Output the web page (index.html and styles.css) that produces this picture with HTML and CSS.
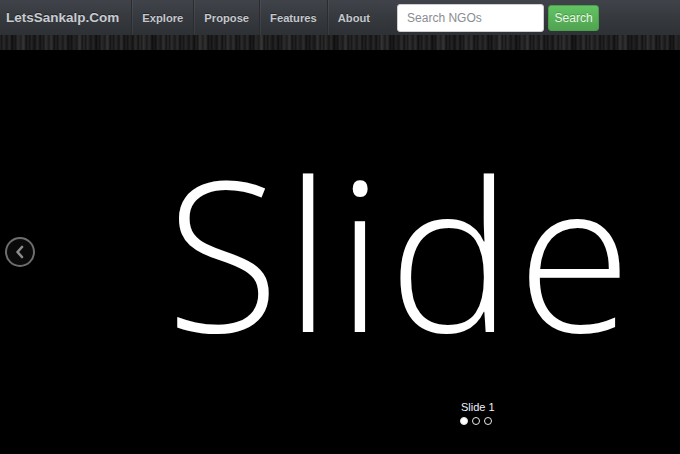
FILE: index.html
```html
<!DOCTYPE html>
<html>
<head>
<meta charset="utf-8">
<link rel="stylesheet" href="styles.css">
</head>
<body>
<header class="navbar">
  <a class="brand" href="#">LetsSankalp.Com</a>
  <ul class="nav">
    <li><a href="#">Explore</a></li>
    <li><a href="#">Propose</a></li>
    <li><a href="#">Features</a></li>
    <li><a href="#">About</a></li>
  </ul>
  <form class="search">
    <input class="search-input" type="text" placeholder="Search NGOs">
    <button class="search-btn" type="button">Search</button>
  </form>
</header>
<div class="wood"></div>
<section class="carousel">
  <div class="slide-text">Slide</div>
  <a class="arrow-left" href="#"><svg width="12" height="14" viewBox="0 0 12 14"><path d="M8 2 L3.5 7 L8 12" fill="none" stroke="#8c8c8c" stroke-width="2.6" stroke-linecap="round" stroke-linejoin="round"/></svg></a>
  <div class="caption">
    <div class="caption-label">Slide <span class="num">1</span></div>
    <div class="dots"><span class="dot on"></span><span class="dot"></span><span class="dot"></span></div>
  </div>
</section>
</body>
</html>
```
FILE: styles.css
```css
html, body {
  margin: 0;
  padding: 0;
  background: #000;
  height: 100%;
  overflow: hidden;
}
body {
  font-family: "Liberation Sans", Arial, sans-serif;
}
.navbar {
  height: 35px;
  display: flex;
  align-items: center;
  background: linear-gradient(to bottom, #40444a 0%, #35383d 55%, #2d3034 100%);
  box-sizing: border-box;
}
.brand {
  color: #c8cbd0;
  font-weight: bold;
  font-size: 13.5px;
  text-decoration: none;
  padding-left: 6px;
  padding-right: 12px;
  text-shadow: 0 -1px 0 rgba(0,0,0,0.4);
}
.nav {
  display: flex;
  list-style: none;
  margin: 0;
  padding: 0;
  height: 35px;
}
.nav li {
  display: flex;
  align-items: center;
  border-left: 1px solid #2a2c30;
  box-shadow: inset 1px 0 0 rgba(255,255,255,0.06);
}
.nav a {
  color: #c4c7cc;
  font-weight: bold;
  font-size: 11.2px;
  text-decoration: none;
  padding: 0 10px;
  text-shadow: 0 -1px 0 rgba(0,0,0,0.35);
}
.search {
  display: flex;
  align-items: center;
  margin-left: 17px;
  gap: 4px;
}
.search-input {
  width: 147px;
  height: 28px;
  box-sizing: border-box;
  border: 1px solid #cfcfcf;
  border-radius: 3px;
  padding: 0 9px;
  font-family: "Liberation Sans", Arial, sans-serif;
  font-size: 12px;
  color: #555;
  background: #fff;
  outline: none;
}
.search-input::placeholder {
  color: #8a8d92;
}
.search-btn {
  width: 51px;
  height: 26px;
  border: 1px solid #4aa04a;
  border-radius: 3px;
  background: linear-gradient(to bottom, #62c462, #51a351);
  color: #eaf7ea;
  font-family: "Liberation Sans", Arial, sans-serif;
  font-size: 12px;
  padding: 0;
  text-shadow: 0 -1px 0 rgba(0,0,0,0.2);
}
.wood {
  height: 15px;
  background:
    repeating-linear-gradient(90deg,
      rgba(0,0,0,0) 0px, rgba(0,0,0,0.5) 2px, rgba(255,255,255,0.04) 3px, rgba(0,0,0,0) 5px,
      rgba(0,0,0,0.35) 7px, rgba(255,255,255,0.05) 9px, rgba(0,0,0,0) 11px, rgba(0,0,0,0.6) 12px, rgba(0,0,0,0) 14px),
    repeating-linear-gradient(90deg,
      #262626 0px, #1c1c1c 13px, #2e2e2e 21px, #1a1a1a 34px, #2a2a2a 47px, #202020 60px),
    #222;
}
.carousel {
  position: relative;
  height: 404px;
  background: #000;
}
.slide-text {
  font-family: "Open Sans", "Segoe UI", sans-serif;
  font-weight: 300;
  font-size: 208px;
  line-height: 1;
  color: #fff;
  padding-left: 166px;
  padding-top: 98px;
  letter-spacing: 5px;
}
.arrow-left {
  position: absolute;
  left: 5px;
  top: 187px;
  width: 30px;
  height: 30px;
  box-sizing: border-box;
  border: 2px solid #6d6d6d;
  border-radius: 50%;
  display: flex;
  align-items: center;
  justify-content: center;
  background: rgba(255,255,255,0.04);
}
.caption {
  position: absolute;
  left: 459px;
  top: 351px;
  display: flex;
  flex-direction: column;
  align-items: flex-start;
  gap: 4px;
}
.caption-label {
  color: #eef2ff;
  font-size: 11px;
  padding-left: 2px;
}
.caption-label .num {
  color: #fff0e0;
}
.dots {
  display: flex;
  gap: 4px;
  padding-left: 1px;
}
.dot {
  width: 8px;
  height: 8px;
  box-sizing: border-box;
  border-radius: 50%;
  border: 1px solid #e8e8e8;
}
.dot.on {
  background: #fff;
}
```
